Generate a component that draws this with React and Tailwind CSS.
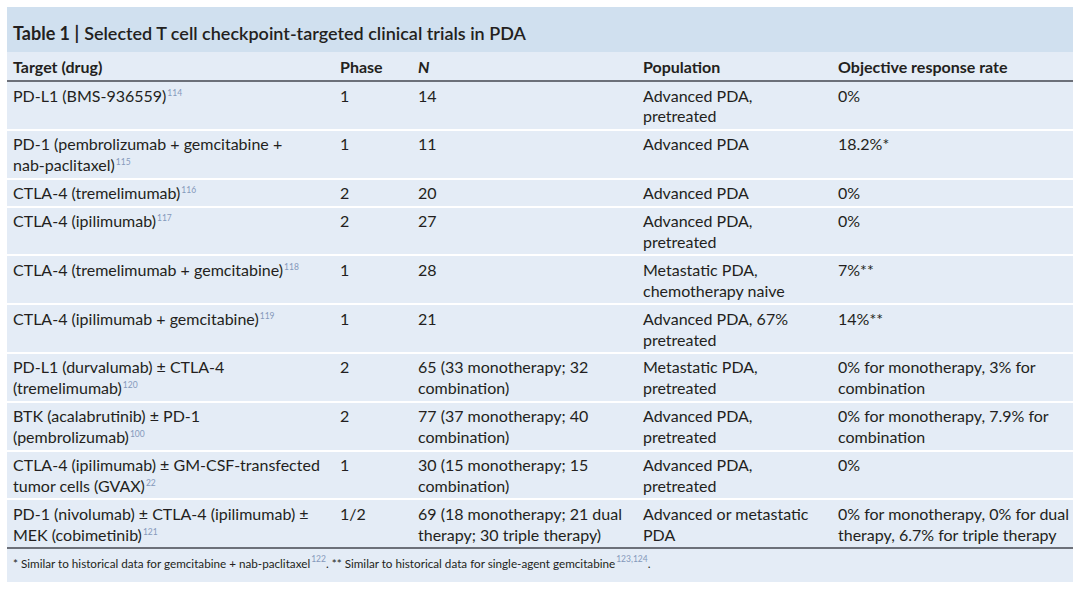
const rows = [
  {
    target: [["PD-L1 (BMS-936559)", "114"]],
    phase: "1",
    n: ["14"],
    pop: ["Advanced PDA,", "pretreated"],
    orr: ["0%"],
  },
  {
    target: [["PD-1 (pembrolizumab + gemcitabine +"], ["nab-paclitaxel)", "115"]],
    phase: "1",
    n: ["11"],
    pop: ["Advanced PDA"],
    orr: ["18.2%*"],
  },
  {
    target: [["CTLA-4 (tremelimumab)", "116"]],
    phase: "2",
    n: ["20"],
    pop: ["Advanced PDA"],
    orr: ["0%"],
  },
  {
    target: [["CTLA-4 (ipilimumab)", "117"]],
    phase: "2",
    n: ["27"],
    pop: ["Advanced PDA,", "pretreated"],
    orr: ["0%"],
  },
  {
    target: [["CTLA-4 (tremelimumab + gemcitabine)", "118"]],
    phase: "1",
    n: ["28"],
    pop: ["Metastatic PDA,", "chemotherapy naive"],
    orr: ["7%**"],
  },
  {
    target: [["CTLA-4 (ipilimumab + gemcitabine)", "119"]],
    phase: "1",
    n: ["21"],
    pop: ["Advanced PDA, 67%", "pretreated"],
    orr: ["14%**"],
  },
  {
    target: [["PD-L1 (durvalumab) ± CTLA-4"], ["(tremelimumab)", "120"]],
    phase: "2",
    n: ["65 (33 monotherapy; 32", "combination)"],
    pop: ["Metastatic PDA,", "pretreated"],
    orr: ["0% for monotherapy, 3% for", "combination"],
  },
  {
    target: [["BTK (acalabrutinib) ± PD-1"], ["(pembrolizumab)", "100"]],
    phase: "2",
    n: ["77 (37 monotherapy; 40", "combination)"],
    pop: ["Advanced PDA,", "pretreated"],
    orr: ["0% for monotherapy, 7.9% for", "combination"],
  },
  {
    target: [["CTLA-4 (ipilimumab) ± GM-CSF-transfected"], ["tumor cells (GVAX)", "22"]],
    phase: "1",
    n: ["30 (15 monotherapy; 15", "combination)"],
    pop: ["Advanced PDA,", "pretreated"],
    orr: ["0%"],
  },
  {
    target: [["PD-1 (nivolumab) ± CTLA-4 (ipilimumab) ±"], ["MEK (cobimetinib)", "121"]],
    phase: "1/2",
    n: ["69 (18 monotherapy; 21 dual", "therapy; 30 triple therapy)"],
    pop: ["Advanced or metastatic", "PDA"],
    orr: ["0% for monotherapy, 0% for dual", "therapy, 6.7% for triple therapy"],
  },
];

// superscript reference number, small light-blue
function Ref({ n }) {
  return <span className="relative -top-[6px] ml-[1px] text-[8.5px] leading-[0] text-[#8499bb]">{n}</span>;
}

function Lines({ lines }) {
  return (
    <div className="whitespace-nowrap">
      {lines.map((l, i) => (
        <div key={i}>{l}</div>
      ))}
    </div>
  );
}

export default function App() {
  return (
    <div className="w-[1080px] h-[589px] bg-white pt-[7px] pl-[7px] font-['Lato','Liberation_Sans',sans-serif] text-[#231f20]">
      <div className="w-[1066px] h-[575px] bg-[#e4ecf6] flex flex-col overflow-hidden">
        {/* title band */}
        <div className="shrink-0 h-[45px] bg-[#d0e0ef] flex items-end pb-[8px] px-[6px] text-[18px] leading-[22px] whitespace-nowrap">
          <span className="font-bold">Table 1 |</span>
          <span className="font-semibold ml-[5px]">Selected T cell checkpoint-targeted clinical trials in PDA</span>
        </div>

        {/* header */}
        <div className="shrink-0 grid grid-cols-[327px_78px_225px_195px_1fr] px-[6px] h-[30px] items-center font-bold text-[16px] leading-[21px] border-b-2 border-[#6c7079]">
          <div>Target (drug)</div>
          <div>Phase</div>
          <div className="italic">N</div>
          <div>Population</div>
          <div>Objective response rate</div>
        </div>

        {/* body */}
        {rows.map((r, i) => (
          <div
            key={i}
            className={
              "shrink-0 grid grid-cols-[327px_78px_225px_195px_1fr] px-[6px] pt-[3.5px] pb-[1.5px] text-[16px] leading-[20.9px] " +
              (i > 0 ? "border-t-2 border-white" : "")
            }
          >
            <div className="whitespace-nowrap">
              {r.target.map((t, j) => (
                <div key={j}>
                  {t[0]}
                  {t[1] && <Ref n={t[1]} />}
                </div>
              ))}
            </div>
            <div>{r.phase}</div>
            <Lines lines={r.n} />
            <Lines lines={r.pop} />
            <Lines lines={r.orr} />
          </div>
        ))}

        {/* footnote */}
        <div className="shrink-0 border-t-2 border-[#6c7079] px-[6px] pt-[6px] text-[11.7px] leading-[16px] whitespace-nowrap">
          * Similar to historical data for gemcitabine + nab-paclitaxel<Ref n="122" />. ** Similar to historical data for
          single-agent gemcitabine<Ref n="123,124" />.
        </div>
      </div>
    </div>
  );
}
